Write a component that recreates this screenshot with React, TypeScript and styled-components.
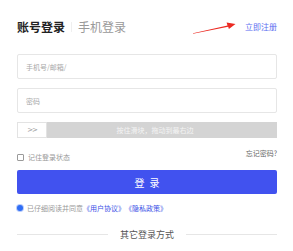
import React from "react";
import styled, { createGlobalStyle } from "styled-components";

const Global = createGlobalStyle`
  html, body { margin: 0; padding: 0; background: #fff; }
  body { font-family: "Noto Sans CJK SC", "Noto Sans", sans-serif; }
  * { box-sizing: border-box; }
`;

const Page = styled.div`
  position: relative;
  width: 293px;
  height: 251px;
  padding: 20px 16px 0 17px;
  overflow: hidden;
`;

const TitleRow = styled.div`
  display: flex;
  align-items: center;
  height: 14px;
`;

const Tab = styled.span<{ $active?: boolean }>`
  font-size: 12px;
  line-height: 14px;
  font-weight: ${(p) => (p.$active ? 700 : 400)};
  color: ${(p) => (p.$active ? "#222" : "#999")};
`;

const Divider = styled.span`
  width: 1px;
  height: 10px;
  background: #efefef;
  margin: 0 6px;
`;

const RegisterLink = styled.a`
  margin-left: auto;
  font-size: 8px;
  line-height: 10px;
  color: #5a6cf0;
  text-decoration: none;
`;

const Arrow = styled.svg`
  position: absolute;
  left: 190px;
  top: 20px;
`;

const Field = styled.input`
  display: block;
  width: 100%;
  height: 25px;
  border: 1px solid #e6e6e6;
  border-radius: 2px;
  padding: 0 8px;
  font-family: inherit;
  font-size: 7px;
  outline: none;
  margin-top: ${(p: { $mt: number }) => p.$mt}px;
  &::placeholder { color: #a8a8a8; }
`;

const Slider = styled.div`
  display: flex;
  height: 16px;
  margin-top: 9px;
`;

const Handle = styled.div`
  width: 30px;
  border: 1px solid #e3e3e3;
  background: #fff;
  display: flex;
  align-items: center;
  justify-content: center;
  font-size: 7px;
  color: #999;
  font-family: "DejaVu Sans", sans-serif;
  letter-spacing: -1px;
`;

const Track = styled.div`
  flex: 1;
  background: #d4d4d4;
  display: flex;
  align-items: center;
  justify-content: center;
  padding-right: 14px;
  font-size: 7px;
  color: #f4f4f4;
`;

const OptionRow = styled.div`
  display: flex;
  justify-content: space-between;
  align-items: flex-start;
  height: 14px;
  margin-top: 12px;
`;

const Remember = styled.label`
  display: flex;
  align-items: center;
  margin-top: 3px;
  font-size: 7px;
  line-height: 9px;
  color: #999;
`;

const Box = styled.span`
  width: 7px;
  height: 7px;
  border: 1px solid #9a9a9a;
  border-radius: 1px;
  margin-right: 4px;
`;

const Forgot = styled.a`
  font-size: 7px;
  line-height: 7px;
  color: #666;
  text-decoration: none;
`;

const LoginButton = styled.button`
  display: block;
  width: 100%;
  height: 24px;
  margin-top: 6px;
  border: none;
  border-radius: 2px;
  background: #4152ef;
  color: #fff;
  font-family: inherit;
  font-size: 10px;
  letter-spacing: 5px;
  text-indent: 5px;
`;

const Agree = styled.div`
  display: flex;
  align-items: center;
  height: 10px;
  margin-top: 9px;
  font-size: 7px;
  color: #999;
`;

const Radio = styled.span`
  width: 6px;
  height: 6px;
  border-radius: 50%;
  background: #2f6df5;
  box-shadow: 0 0 0 1px #b8ccfb;
  margin-right: 4px;
`;

const DocLink = styled.span`
  color: #3a4fe6;
`;

const Other = styled.div`
  display: flex;
  align-items: center;
  height: 12px;
  margin-top: 15px;
  font-size: 9px;
  color: #555;
  &::before, &::after {
    content: "";
    flex: 1;
    height: 1px;
    background: #e6e6e6;
  }
  &::before { margin-right: 12px; }
  &::after { margin-left: 12px; }
`;

export default function App() {
  return (
    <>
      <Global />
      <Page>
        <TitleRow>
          <Tab $active>账号登录</Tab>
          <Divider />
          <Tab>手机登录</Tab>
          <RegisterLink>立即注册</RegisterLink>
        </TitleRow>
        <Arrow width="50" height="16" viewBox="0 0 50 16">
          <polygon points="3,13.2 37.5,5.4 36.6,2.6 45.5,4 38.9,9 38.2,6.7 3,13.8" fill="#ec2a22" />
        </Arrow>
        <Field $mt={20} placeholder="手机号/邮箱/" />
        <Field $mt={9} placeholder="密码" type="password" />
        <Slider>
          <Handle>&gt;&gt;</Handle>
          <Track>按住滑块，拖动到最右边</Track>
        </Slider>
        <OptionRow>
          <Remember>
            <Box />
            记住登录状态
          </Remember>
          <Forgot>忘记密码?</Forgot>
        </OptionRow>
        <LoginButton>登录</LoginButton>
        <Agree>
          <Radio />
          已仔细阅读并同意<DocLink>《用户协议》</DocLink>
          <DocLink>《隐私政策》</DocLink>
        </Agree>
        <Other>其它登录方式</Other>
      </Page>
    </>
  );
}
